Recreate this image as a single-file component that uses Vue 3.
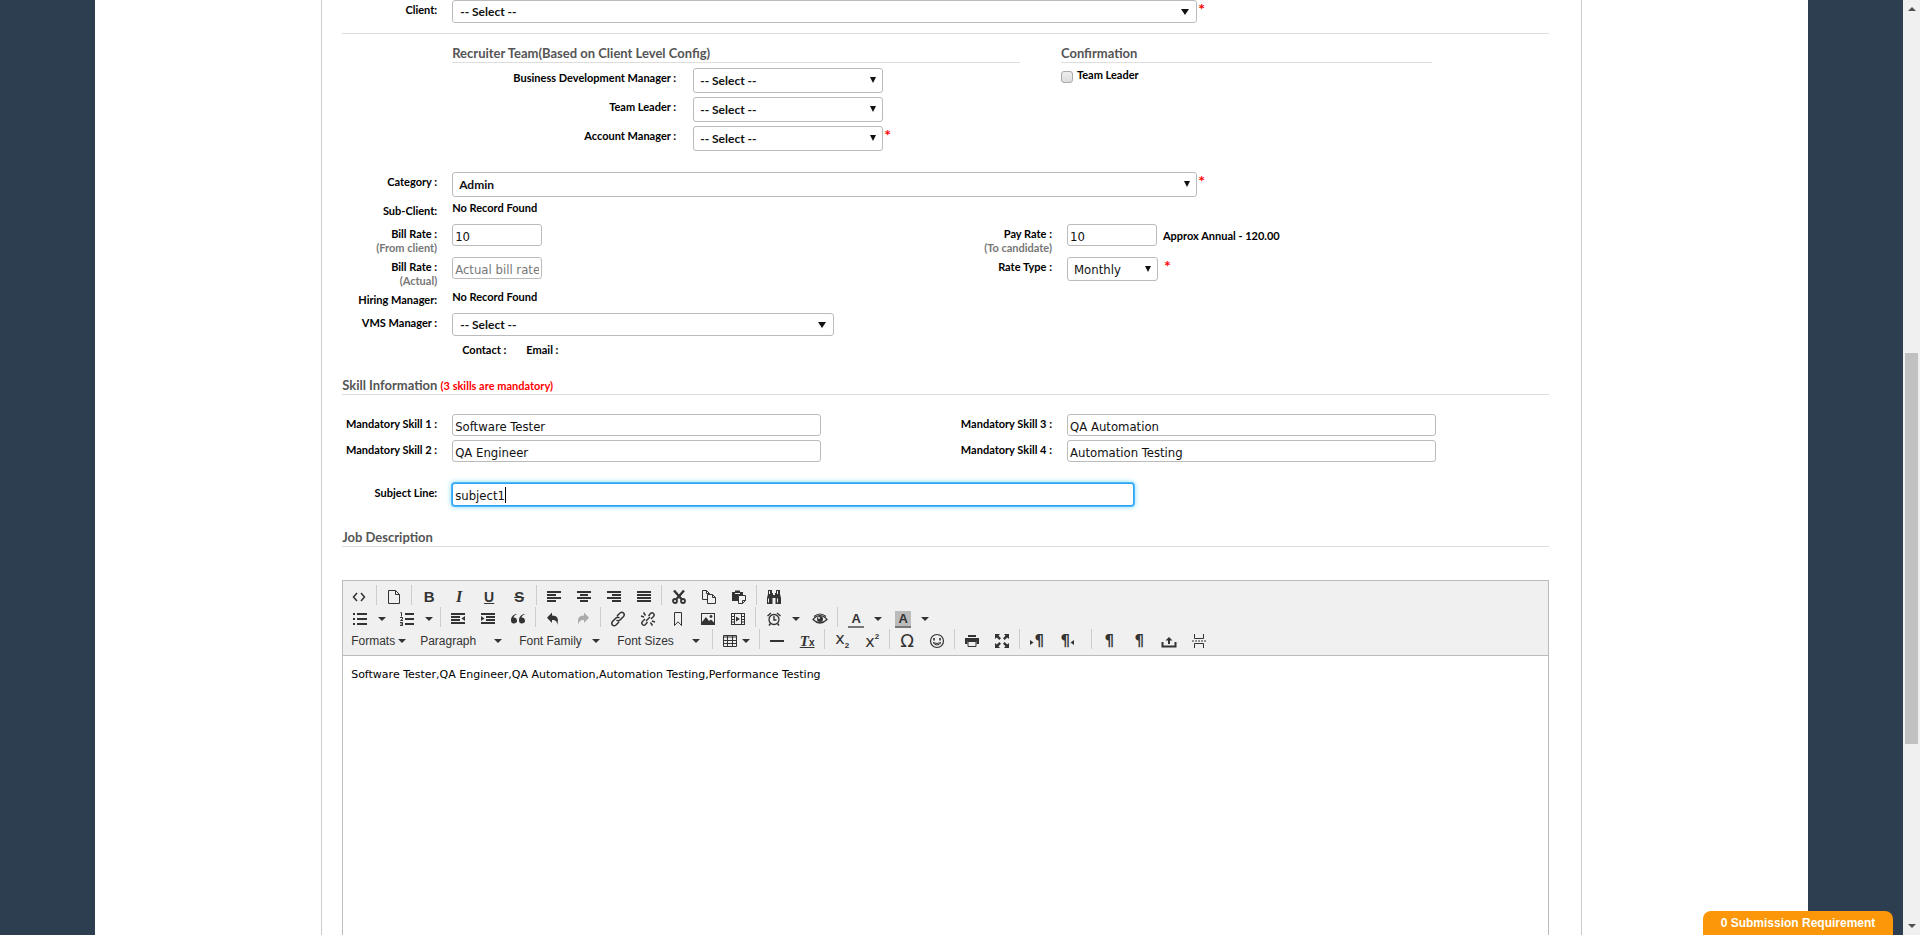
<script setup>
import { ref, onMounted } from 'vue'

const subject = ref('subject1')
const subjectInput = ref(null)
onMounted(() => subjectInput.value.focus({ preventScroll: true }))

const team = [
  { id: 'bdm', label: 'Business Development Manager :', required: false },
  { id: 'tl', label: 'Team Leader :', required: false },
  { id: 'am', label: 'Account Manager :', required: true },
]

const skills = [
  { n: 1, value: 'Software Tester' },
  { n: 3, value: 'QA Automation' },
  { n: 2, value: 'QA Engineer' },
  { n: 4, value: 'Automation Testing' },
]

const icons = {
  code: '<path d="M6 4 2.500 8 6 12M10 4l3.500 4L10 12" fill="none" stroke="currentColor" stroke-width="1.500"/>',
  page: '<path d="M2.500 1.500h7l4 4v9h-11zM9.500 1.500v4h4" fill="none" stroke="currentColor"/>',
  left: '<path d="M1 3h14M1 6h9M1 9h14M1 12h9" stroke="currentColor" stroke-width="2"/>',
  center: '<path d="M1 3h14M4 6h8M1 9h14M4 12h8" stroke="currentColor" stroke-width="2"/>',
  right: '<path d="M1 3h14M6 6h9M1 9h14M6 12h9" stroke="currentColor" stroke-width="2"/>',
  justify: '<path d="M1 3h14M1 6h14M1 9h14M1 12h14" stroke="currentColor" stroke-width="2"/>',
  cut: '<path d="M3 1.500 10.500 10M13 1.500 5.500 10" fill="none" stroke="currentColor" stroke-width="2.400"/><circle cx="4" cy="12" r="2" fill="none" stroke="currentColor" stroke-width="1.800"/><circle cx="12" cy="12" r="2" fill="none" stroke="currentColor" stroke-width="1.800"/>',
  copy: '<path d="M6 10.500H1.500v-9h4l3 3v1.500M5.500 1.500v3h3M6.500 5.500h5l3 3v6h-8zM11.500 5.500v3h3" fill="none" stroke="currentColor"/>',
  paste: '<path d="M1 3h3V1.500h5V3h3v3.500H7V12H1z" fill="currentColor"/><path d="M4 4.500h5" stroke="#f0f0f0"/><path d="M7.500 6.500h7v5l-3 3h-4zM14.500 11.500h-3v3" fill="#f0f0f0" stroke="currentColor"/>',
  find: '<path d="M2 1h4v3h1v2h2V4h1V1h4v4l1 4v6H9.500V9h-3v6H1V9l1-4z" fill="currentColor"/><path d="M2.500 9.500v4M11.500 9.500v4M3.500 2v3M11.500 2v3" stroke="#f0f0f0"/>',
  bullets: '<path d="M1 3h2M1 8h2M1 13h2" stroke="currentColor" stroke-width="2"/><path d="M5 3h10M5 8h10M5 13h10" stroke="currentColor" stroke-width="2"/>',
  numbers: '<path d="M6 3h9M6 8h9M6 13h9" stroke="currentColor" stroke-width="2"/><path d="M1.500 1.500h1v4M1 6.500h2.500v1.500L1.500 9.500h2.500M1 11.500h2.500v3H1M1.500 13h2" fill="none" stroke="currentColor"/>',
  outdent: '<path d="M1 3h14M1 6h9M1 9h9M1 12h14" stroke="currentColor" stroke-width="2"/><path d="m15 5-3.500 2.500L15 10z" fill="currentColor"/>',
  indent: '<path d="M1 3h14M6 6h9M6 9h9M1 12h14" stroke="currentColor" stroke-width="2"/><path d="m1 5 3.500 2.500L1 10z" fill="currentColor"/>',
  quote: '<path d="M6.500 3C3 3.500 1 6 1 9.500a3 3 0 1 0 2.500-3C3.800 5 5 4 6.500 3.800zM14.500 3C11 3.500 9 6 9 9.500a3 3 0 1 0 2.500-3C11.800 5 13 4 14.500 3.800z" fill="currentColor"/>',
  undo: '<path d="M7 1.500v3c5 0 7.500 3 5 9.500.3-3.500-1-5-5-5V12L2 6.800z" fill="currentColor"/>',
  redo: '<path d="M9 1.500v3c-5 0-7.500 3-5 9.500-.3-3.500 1-5 5-5V12l5-5.200z" fill="currentColor"/>',
  link: '<path d="m7 5 3-3q2-1.500 3.500 0t0 3.500l-3.500 3.500q-1.500 1.500-3.500 0M9 11l-3 3q-2 1.500-3.500 0t0-3.500L6 7q1.500-1.500 3.500 0" fill="none" stroke="currentColor" stroke-width="1.500"/>',
  unlink: '<path d="m8.500 5 2-2.500q1.500-1.500 3 0t0 3L11 8M7.500 11l-2 2.500q-1.500 1.500-3 0t0-3L5 8M3.500 1.500l2 3M1 5l3 1M12.500 14.500l-2-3M15 11l-3-1M6 10l4-4" fill="none" stroke="currentColor" stroke-width="1.400"/>',
  bookmark: '<path d="M4.500 1.500h7v13L8 10.800l-3.500 3.700z" fill="none" stroke="currentColor"/>',
  image: '<rect x="1.500" y="2.500" width="13" height="11" fill="none" stroke="currentColor"/><path d="M2 13v-2l4-5 3 4 2-1.500 3 3V13z" fill="currentColor"/><circle cx="11" cy="5.500" r="1.400" fill="currentColor"/>',
  media: '<rect x="1.500" y="2.500" width="13" height="11" fill="none" stroke="currentColor"/><path d="M4.500 2v12M11.500 2v12M2 5.500h2.500M2 8.500h2.500M2 11h2.500M11.500 5.500H14M11.500 8.500H14M11.500 11H14" stroke="currentColor"/><path d="m6 5.500 4 2.500-4 2.500z" fill="currentColor"/>',
  clock: '<circle cx="8" cy="8.500" r="5" fill="none" stroke="currentColor" stroke-width="1.300"/><path d="M8 5v4h2.500M1.500 5 5 2M14.500 5 11 2M4.500 12.500 3 14.500M11.500 12.500l1.500 2" fill="none" stroke="currentColor" stroke-width="1.400"/>',
  eye: '<path d="M1 8.500q7-8 14 0-7 7-14 0zM2 5.500q6-5 12 0" fill="none" stroke="currentColor" stroke-width="1.200"/><circle cx="8" cy="8" r="3" fill="currentColor"/><circle cx="7" cy="7" r="1" fill="#f0f0f0"/>',
  table: '<path d="M1.500 2.500h13v11h-13zM1.500 4h13M1.500 7.500h13M1.500 10.500h13M5.500 3v10.500M10.500 3v10.500" fill="none" stroke="currentColor"/>',
  rule: '<path d="M1 8h14" stroke="currentColor" stroke-width="2"/>',
  smile: '<circle cx="8" cy="8" r="6.500" fill="none" stroke="currentColor" stroke-width="1.200"/><path d="M5 5v2.500M11 5v2.500" stroke="currentColor" stroke-width="1.600"/><path d="M4 9.500q4 5 8 0-4 2-8 0" fill="none" stroke="currentColor"/>',
  print: '<path d="M4 2h8v2H4zM1 5h14v6h-2.500V8.500h-9V11H1z" fill="currentColor"/><path d="M4 8.500h8v5H4z" fill="none" stroke="currentColor"/>',
  full: '<path d="M1 1h5L4.500 2.800 7 5.300 5.300 7 2.800 4.500 1 6zM15 1v5l-1.800-1.500L10.700 7 9 5.300l2.500-2.500L10 1zM1 15v-5l1.800 1.500L5.300 9 7 10.700l-2.500 2.500L6 15zM15 15h-5l1.500-1.800L9 10.700 10.700 9l2.500 2.500L15 10z" fill="currentColor"/>',
  ltr: '<path d="m1 7 3.500 2.500L1 12z" fill="currentColor"/>',
  rtl: '<path d="m15 7-3.500 2.500L15 12z" fill="currentColor"/>',
  upload: '<path d="M1.500 9v4.500h13V9M8 11V5" fill="none" stroke="currentColor" stroke-width="2"/><path d="M4.500 7.500 8 4l3.500 3.500z" fill="currentColor"/>',
  pagebreak: '<path d="M3.500 1v4.500h9V1M3.500 15v-4.500h9V15" fill="none" stroke="currentColor"/><path d="M1 8h14" stroke="currentColor" stroke-dasharray="2 1"/>',
}

const i = (icon, title, extra = {}) => ({ icon, title, ...extra })
const t = (text, title, cls) => ({ text, title, cls })
const m = (text, width) => ({ menu: text, title: text, width })

const toolbar = [
  [
    [i('code', 'Source code')],
    [i('page', 'New document')],
    [t('B', 'Bold', 'bold'), t('I', 'Italic', 'italic'), t('U', 'Underline', 'under'), t('S', 'Strikethrough', 'strike')],
    [i('left', 'Align left'), i('center', 'Align center'), i('right', 'Align right'), i('justify', 'Justify')],
    [i('cut', 'Cut'), i('copy', 'Copy'), i('paste', 'Paste')],
    [i('find', 'Find and replace')],
  ],
  [
    [i('bullets', 'Bullet list', { split: true }), i('numbers', 'Numbered list', { split: true })],
    [i('outdent', 'Decrease indent'), i('indent', 'Increase indent'), i('quote', 'Blockquote')],
    [i('undo', 'Undo'), i('redo', 'Redo', { disabled: true })],
    [i('link', 'Insert link'), i('unlink', 'Remove link'), i('bookmark', 'Anchor'), i('image', 'Insert image'), i('media', 'Insert video')],
    [i('clock', 'Insert date', { split: true }), i('eye', 'Preview')],
    [{ text: 'A', title: 'Text color', cls: 'color', split: true }, { text: 'A', title: 'Background color', cls: 'color filled', split: true }],
  ],
  [
    [m('Formats', 69), m('Paragraph', 99), m('Font Family', 98), m('Font Sizes', 100)],
    [i('table', 'Table', { table: true })],
    [i('rule', 'Horizontal line'), { text: 'T', small: 'x', title: 'Clear formatting', cls: 'clear' }],
    [{ text: 'x', small: '2', title: 'Subscript', cls: 'sub' }, { text: 'x', small: '2', title: 'Superscript', cls: 'sup' }],
    [t('Ω', 'Special character', 'omega'), i('smile', 'Emoticons')],
    [i('print', 'Print'), i('full', 'Fullscreen')],
    [i('ltr', 'Left to right', { text: '¶', cls: 'para toright' }), i('rtl', 'Right to left', { text: '¶', cls: 'para toleft' })],
    [t('¶', 'Show blocks', 'para'), t('¶', 'Show invisible characters', 'para'), i('upload', 'Upload'), i('pagebreak', 'Page break')],
  ],
]
</script>

<template>
  <div class="page">
    <main class="sheet">
      <form class="panel" @submit.prevent>
        <div class="row">
          <label class="lbl" for="client">Client:</label>
          <div class="field wide">
            <span class="pick short"><select id="client"><option>-- Select --</option></select></span>
            <span class="req">*</span>
          </div>
        </div>
        <hr />

        <div class="team">
          <section class="recruiters">
            <h2>Recruiter Team(Based on Client Level Config)</h2>
            <div v-for="r in team" :key="r.id" class="team-row">
              <label class="lbl" :for="r.id">{{ r.label }}</label>
              <span class="pick"><select :id="r.id"><option>-- Select --</option></select></span>
              <span v-if="r.required" class="req">*</span>
            </div>
          </section>
          <section class="confirm">
            <h2>Confirmation</h2>
            <label class="check"><input type="checkbox" /><span>Team Leader</span></label>
          </section>
        </div>

        <div class="row r29">
          <label class="lbl" for="category">Category :</label>
          <div class="field wide">
            <span class="pick"><select id="category"><option>Admin</option></select></span>
            <span class="req">*</span>
          </div>
        </div>
        <div class="row r23">
          <span class="lbl">Sub-Client:</span>
          <span class="static">No Record Found</span>
        </div>
        <div class="row r33">
          <label class="lbl" for="bill">Bill Rate :<small>(From client)</small></label>
          <div class="field"><input id="bill" class="rate" type="text" value="10" /></div>
          <label class="lbl" for="pay">Pay Rate :<small>(To candidate)</small></label>
          <div class="field"><input id="pay" class="rate" type="text" value="10" /><span class="note">Approx Annual - 120.00</span></div>
        </div>
        <div class="row r33">
          <label class="lbl" for="actual">Bill Rate :<small>(Actual)</small></label>
          <div class="field"><input id="actual" class="rate" type="text" placeholder="Actual bill rate" /></div>
          <label class="lbl" for="type">Rate Type :</label>
          <div class="field"><span class="pick monthly"><select id="type"><option>Monthly</option></select></span><span class="req away">*</span></div>
        </div>
        <div class="row r23">
          <span class="lbl">Hiring Manager:</span>
          <span class="static">No Record Found</span>
        </div>
        <div class="row r29">
          <label class="lbl" for="vms">VMS Manager :</label>
          <div class="field"><span class="pick short vms"><select id="vms"><option>-- Select --</option></select></span></div>
        </div>
        <div class="contact"><span>Contact :</span><span>Email :</span></div>

        <h2 class="skills-title">Skill Information <em>(3 skills are mandatory)</em></h2>
        <div class="row skills">
          <template v-for="s in skills" :key="s.n">
            <label class="lbl" :for="'skill' + s.n">Mandatory Skill {{ s.n }} :</label>
            <div class="field"><input :id="'skill' + s.n" class="skill" type="text" :value="s.value" /></div>
          </template>
        </div>
        <div class="row">
          <label class="lbl" for="subject">Subject Line:</label>
          <div class="field wide subject"><input id="subject" ref="subjectInput" v-model="subject" type="text" /></div>
        </div>

        <h2 class="job-title">Job Description</h2>
        <section class="editor">
          <div class="toolbar" role="toolbar" aria-label="Formatting">
            <div v-for="(line, li) in toolbar" :key="li" class="bar">
              <div v-for="(group, gi) in line" :key="gi" class="group">
                <template v-for="b in group" :key="b.title">
                  <button v-if="b.menu" type="button" class="menu" :style="{ width: b.width + 'px' }">
                    <span>{{ b.menu }}</span><i class="caret"></i>
                  </button>
                  <template v-else>
                    <button type="button" class="btn" :class="[b.cls, { main: b.split, table: b.table }]" :title="b.title" :disabled="b.disabled">
                      <svg v-if="b.icon" viewBox="0 0 16 16" aria-hidden="true" v-html="icons[b.icon]"></svg>
                      <span v-if="b.text">{{ b.text }}<small v-if="b.small">{{ b.small }}</small></span>
                      <i v-if="b.table" class="caret"></i>
                    </button>
                    <button v-if="b.split" type="button" class="drop" :aria-label="b.title + ' options'"><i class="caret"></i></button>
                  </template>
                </template>
              </div>
            </div>
          </div>
          <div class="document" contenteditable="true">Software Tester,QA Engineer,QA Automation,Automation Testing,Performance Testing</div>
        </section>
      </form>
    </main>
    <button type="button" class="submission">0 Submission Requirement</button>
    <div class="scroll" aria-hidden="true"><i class="up"></i><i class="thumb"></i><i class="down"></i></div>
  </div>
</template>

<style>
body { margin: 0; }
</style>

<style scoped>
* { box-sizing: border-box; }
.page {
  min-height: 100vh;
  padding-right: 17px;
  display: flex;
  justify-content: center;
  background: #2d3e50;
  color: #000;
  font: 700 11px/14px Lato, "Liberation Sans", sans-serif;
}
.sheet { width: 90%; display: flex; justify-content: center; background: #fff; }
.panel {
  flex: 1;
  margin: 0 226px;
  padding: 0 32px 0 20px;
  display: flex;
  flex-direction: column;
  border: solid #ccc;
  border-width: 0 1px;
}
.row {
  display: grid;
  grid-template-columns: 95px minmax(0, 490fr) 95px minmax(0, 482fr);
  column-gap: 15px;
  align-items: start;
}
.r23 { min-height: 23px; }
.r29 { min-height: 29px; }
.r33 { min-height: 33px; }
.lbl { padding-top: 3px; text-align: right; white-space: nowrap; }
.lbl small { display: block; font-size: 11px; color: #777; }
.field { display: flex; align-items: flex-start; }
.wide { grid-column: 2 / -1; }
.static { white-space: nowrap; }
hr { width: 100%; height: 1px; margin: 10px 0 11px; border: 0; background: #ddd; }
h2 {
  margin: 0;
  font-size: 13px;
  line-height: 17px;
  font-weight: 700;
  color: #555;
  border-bottom: 1px solid #ddd;
}
h2 em { font-size: 11px; font-style: normal; color: #f00; }

input[type="text"] {
  height: 22px;
  padding: 2px 2px 0;
  border: 1px solid #bbb;
  border-radius: 3px;
  background: #fff;
  color: #111;
  font: 13px "DejaVu Sans Condensed", "Noto Sans", sans-serif;
  outline: 0;
}
input::placeholder { color: #777; opacity: 1; }
.pick { position: relative; flex: 1; max-width: 745px; }
.pick::after {
  content: "";
  position: absolute;
  right: 7px;
  top: 9px;
  border: solid transparent;
  border-width: 6px 3px 0;
  border-top-color: #111;
  pointer-events: none;
}
select {
  display: block;
  width: 100%;
  height: 25px;
  padding: 0 20px 0 6px;
  appearance: none;
  border: 1px solid #bbb;
  border-radius: 3px;
  background: #fff;
  color: #111;
  font: 700 12px Lato, "Liberation Sans", sans-serif;
}
.short select { height: 23px; padding-left: 7px; }
.short::after { right: 8px; border-width: 6px 4px 0; }
.vms { max-width: 382px; }
.req { padding-left: 1px; color: #f00; font-size: 16px; line-height: 18px; }
.away { padding-left: 6px; }
.rate { width: 90px; }
.note { padding: 5px 0 0 6px; }
.monthly { max-width: 91px; }
.monthly select { height: 24px; font: 13px "DejaVu Sans Condensed", "Noto Sans", sans-serif; }

.team {
  display: grid;
  grid-template-columns: minmax(0, 568fr) minmax(0, 371fr);
  column-gap: 41px;
  margin: 0 117px 17px 110px;
}
.team h2 { margin-bottom: 5px; }
.team-row {
  display: grid;
  grid-template-columns: 224px 190px auto;
  column-gap: 17px;
  min-height: 29px;
  align-items: start;
}
.team-row .req { margin-left: -17px; }
.check { display: flex; gap: 4px; }
.check input {
  width: 12px;
  height: 12px;
  margin: 3px 0 0;
  appearance: none;
  border: 1px solid #aaa;
  border-radius: 3px;
  background: linear-gradient(#eee, #ddd);
}
.contact { display: flex; gap: 20px; padding-left: 120px; line-height: 16px; }
.skills-title { margin: 19px 0; }
.skills { row-gap: 4px; margin-bottom: 21px; }
.skill { width: 100%; max-width: 369px; }
.subject { position: relative; }
.subject input {
  width: 100%;
  max-width: 682px;
  height: 23px;
  border-color: #2ba4f5;
  box-shadow: 0 0 0 1px #4fb6f8, 0 0 5px 1px #7fdcff;
  caret-color: transparent;
}
.subject::after {
  content: "";
  position: absolute;
  left: 53px;
  top: 4px;
  width: 1px;
  height: 16px;
  background: #000;
}
.job-title { margin: 23px 0 33px; }

.editor { flex: 1; display: flex; flex-direction: column; border: solid #bbb; border-width: 1px 1px 0; }
.toolbar {
  padding: 4px 1px;
  background: #f0f0f0;
  border-bottom: 1px solid #bbb;
  color: #333;
}
.bar { display: flex; flex-wrap: wrap; min-height: 22px; }
.group { display: flex; height: 20px; }
.group + .group { margin-left: 2px; padding-left: 2px; border-left: 1px solid #ccc; }
.group:nth-child(8) { margin-left: 9px; }
.toolbar button {
  height: 22px;
  padding: 2px 0 0;
  display: flex;
  align-items: center;
  justify-content: center;
  border: 0;
  background: none;
  color: #333;
  font: 12px/16px "Liberation Sans", Arial, sans-serif;
}
.btn { position: relative; width: 30px; }
.toolbar button:disabled { color: #aaa; }
.main { width: 32px; }
.toolbar .drop { width: 15px; padding-right: 3px; }
.btn svg { width: 16px; height: 16px; flex: none; }
.caret { border: solid transparent; border-width: 4px 4px 0; border-top-color: #333; }
.toolbar .table { width: 42px; gap: 4px; }
.toolbar .menu { justify-content: space-between; padding: 2px 10px 0 7px; white-space: nowrap; }
.toolbar .menu:first-child { padding-right: 7px; }
.toolbar .bold { font-size: 15px; font-weight: 700; }
.toolbar .italic { font: italic 700 16px/16px "Liberation Serif", serif; }
.toolbar .under { font-size: 14px; font-weight: 700; text-decoration: underline; }
.toolbar .strike { font-size: 15px; font-weight: 700; text-decoration: line-through; }
.toolbar .color { font-size: 13px; font-weight: 700; }
.color span { width: 16px; height: 17px; text-align: center; border-bottom: 2px solid #777; }
.filled span { background: #bbb; }
.toolbar .clear { font: italic 700 15px/16px "Liberation Serif", serif; }
.clear span { text-decoration: underline; }
.btn small { font: 700 10px/10px "Liberation Sans", sans-serif; }
.toolbar .sub, .toolbar .sup { font: 16px/16px "DejaVu Sans", sans-serif; }
.sub small { vertical-align: -4px; font-size: 8px; }
.sup small { vertical-align: 8px; font-size: 8px; }
.toolbar .omega { font: 18px/16px "DejaVu Sans", sans-serif; }
.toolbar .para { font: 700 15px/16px "DejaVu Sans", sans-serif; }
.toright svg, .toleft svg { position: absolute; left: 7px; top: 4px; }
.toright span { padding-left: 4px; }
.toleft span { padding-right: 4px; }
.document { flex: 1; padding: 11px 8px; outline: 0; font: 11px/16px "DejaVu Sans", Verdana, sans-serif; }

.submission {
  position: fixed;
  right: 27px;
  bottom: 0;
  width: 190px;
  height: 24px;
  padding: 0;
  border: 0;
  border-radius: 8px 8px 0 0;
  background: #fb9708;
  color: #fff;
  font: 700 12px "Liberation Sans", Arial, sans-serif;
}
.scroll {
  position: fixed;
  top: 0;
  right: 0;
  bottom: 0;
  width: 17px;
  padding: 7px 2px;
  display: grid;
  grid-template-rows: 4px 342fr 391fr 180fr 4px;
  justify-items: center;
  background: #f0f0f0;
}
.up, .down { border: solid transparent; border-width: 0 4px 4px; border-bottom-color: #505050; }
.down { grid-row: 5; border-width: 4px 4px 0; border-top-color: #505050; }
.thumb { grid-row: 3; width: 13px; background: #c1c1c1; }
</style>
